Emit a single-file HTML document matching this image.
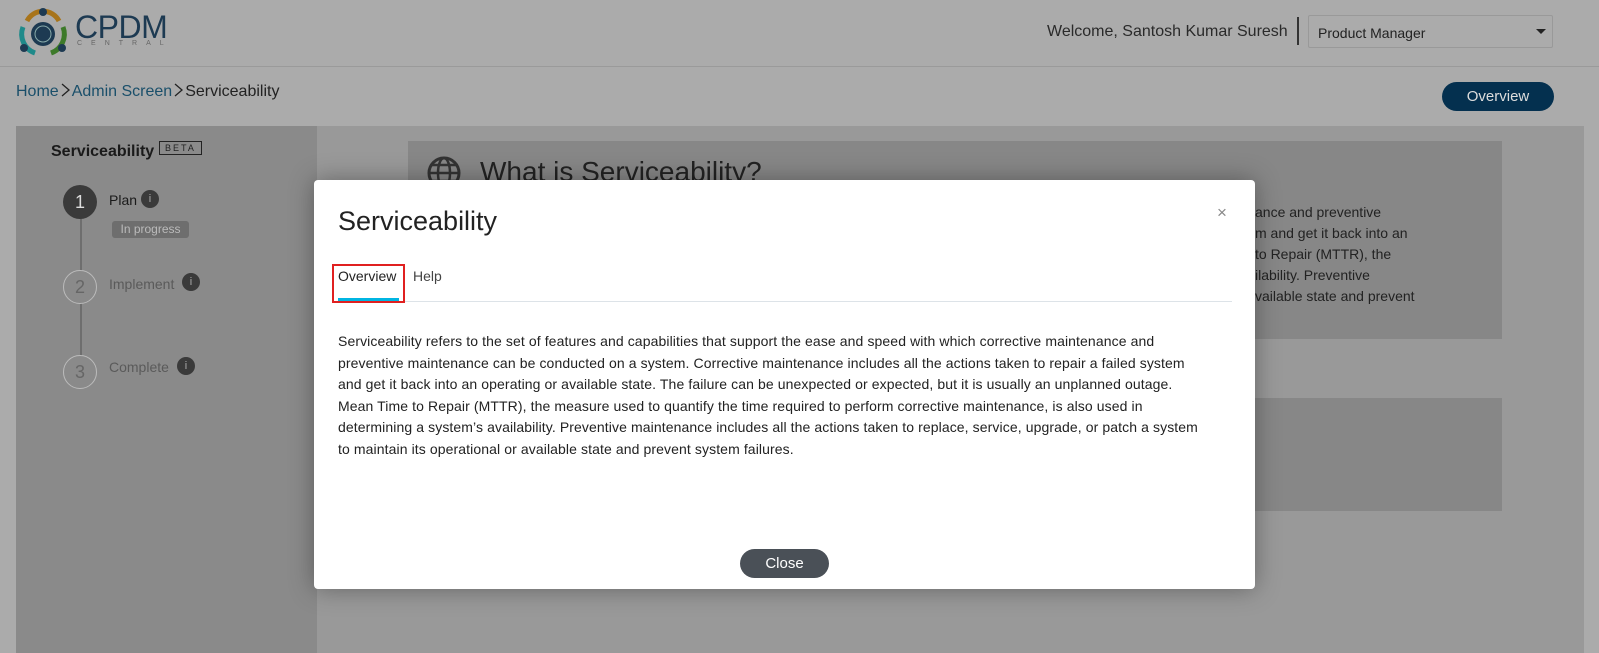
<!DOCTYPE html>
<html><head><meta charset="utf-8"><style>
*{margin:0;padding:0;box-sizing:border-box}
body{width:1599px;height:653px;overflow:hidden;background:#ababab;font-family:"Liberation Sans",Arial,sans-serif;position:relative;color:#222}
.a{position:absolute}
.ch{display:inline-block;width:9px;height:14px;vertical-align:-1px;margin:0 2px}
</style></head><body>
<!-- header -->
<div class="a" style="left:0;top:66px;width:1599px;height:1px;background:#9a9a9a"></div>
<svg class="a" style="left:17px;top:5px" width="52" height="54" viewBox="0 0 52 54">
<path d="M10 16 A18 18 0 0 1 42 16" stroke="#a8741a" stroke-width="5" fill="none"/>
<path d="M6 22 A20 20 0 0 0 18 48" stroke="#1f8a8a" stroke-width="5" fill="none"/>
<path d="M46 22 A20 20 0 0 1 34 48" stroke="#3d7a2a" stroke-width="5" fill="none"/>
<circle cx="26" cy="29" r="12" fill="#1d3a52"/>
<circle cx="26" cy="29" r="8" fill="none" stroke="#8aa" stroke-width="1"/>
<circle cx="26" cy="7" r="4" fill="#1d3a52"/><circle cx="7" cy="43" r="4" fill="#1d3a52"/><circle cx="45" cy="43" r="4" fill="#1d3a52"/>
</svg>
<div class="a" style="left:75px;top:9px;font-size:32px;color:#1d3a52;letter-spacing:-0.5px">CPDM</div>
<div class="a" style="left:77px;top:40px;font-size:7px;color:#666;letter-spacing:9px">CENTRAL</div>
<div class="a" style="left:1047px;top:23px;font-size:16px;color:#2a2a2a">Welcome, Santosh Kumar Suresh</div>
<div class="a" style="left:1297px;top:17px;width:2px;height:28px;background:#333"></div>
<div class="a" style="left:1308px;top:15px;width:245px;height:33px;border:1px solid #999;border-radius:2px;font-size:14px;color:#222;padding:9px 0 0 9px">Product Manager</div>
<div class="a" style="left:1536px;top:29px;border-left:5px solid transparent;border-right:5px solid transparent;border-top:5px solid #222"></div>
<div class="a" style="left:16px;top:83px;font-size:16px;color:#1a4f6a;white-space:nowrap">Home<svg class="ch" viewBox="0 0 9 14"><path d="M1 1 L8 7 L1 13" stroke="#222" stroke-width="1.3" fill="none"/></svg>Admin Screen<svg class="ch" viewBox="0 0 9 14"><path d="M1 1 L8 7 L1 13" stroke="#222" stroke-width="1.3" fill="none"/></svg><span style="color:#222">Serviceability</span></div>
<div class="a" style="left:1442px;top:82px;width:112px;height:29px;border-radius:15px;background:#04304f;color:#ddd;font-size:15px;text-align:center;line-height:29px">Overview</div>
<!-- main -->
<div class="a" style="left:16px;top:126px;width:1568px;height:527px;background:#999"></div>
<div class="a" style="left:16px;top:126px;width:301px;height:527px;background:#8a8a8a"></div>
<div class="a" style="left:408px;top:141px;width:1094px;height:198px;background:#878787"></div>
<div class="a" style="left:408px;top:398px;width:1094px;height:113px;background:#878787"></div>
<div class="a" style="left:480px;top:156px;font-size:28px;color:#222;font-weight:300">What is Serviceability?</div>
<svg class="a" style="left:427px;top:156px" width="34" height="34" viewBox="0 0 34 34"><circle cx="17" cy="17" r="15" stroke="#333" stroke-width="3" fill="none"/><ellipse cx="17" cy="17" rx="6" ry="15" stroke="#333" stroke-width="2.5" fill="none"/><path d="M2 17H32M5 9H29M5 25H29" stroke="#333" stroke-width="2.5"/></svg>
<div class="a" style="left:1255px;top:202px;font-size:14px;line-height:21px;color:#222">ance and preventive<br>m and get it back into an<br>to Repair (MTTR), the<br>ilability. Preventive<br>vailable state and prevent</div>
<!-- left panel -->
<div class="a" style="left:51px;top:143px;font-size:16px;font-weight:bold;color:#1a1a1a">Serviceability</div>
<div class="a" style="left:159px;top:141px;border:1px solid #222;font-size:9px;letter-spacing:2px;padding:1px 5px;color:#222">BETA</div>
<div class="a" style="left:80px;top:215px;width:2px;height:155px;background:#6e6e6e"></div>
<div class="a" style="left:63px;top:185px;width:34px;height:34px;border-radius:50%;background:#3a3a3a;color:#ddd;font-size:18px;text-align:center;line-height:34px">1</div>
<div class="a" style="left:63px;top:270px;width:34px;height:34px;border-radius:50%;background:#8a8a8a;border:1px solid #bbb;color:#666;font-size:18px;text-align:center;line-height:32px">2</div>
<div class="a" style="left:63px;top:355px;width:34px;height:34px;border-radius:50%;background:#8a8a8a;border:1px solid #bbb;color:#666;font-size:18px;text-align:center;line-height:32px">3</div>
<div class="a" style="left:109px;top:192px;font-size:14px;color:#1a1a1a">Plan</div>
<div class="a" style="left:141px;top:190px;width:18px;height:18px;border-radius:50%;background:#3a3a3a;color:#aaa;font-size:11px;text-align:center;line-height:18px">i</div>
<div class="a" style="left:112px;top:221px;width:77px;height:17px;border-radius:3px;background:#6e6e6e;color:#bbb;font-size:12px;text-align:center;line-height:17px">In progress</div>
<div class="a" style="left:109px;top:276px;font-size:14px;color:#5a5a5a">Implement</div>
<div class="a" style="left:182px;top:273px;width:18px;height:18px;border-radius:50%;background:#3a3a3a;color:#aaa;font-size:11px;text-align:center;line-height:18px">i</div>
<div class="a" style="left:109px;top:359px;font-size:14px;color:#5a5a5a">Complete</div>
<div class="a" style="left:177px;top:357px;width:18px;height:18px;border-radius:50%;background:#3a3a3a;color:#aaa;font-size:11px;text-align:center;line-height:18px">i</div>
<!-- modal -->
<div class="a" style="left:314px;top:180px;width:941px;height:409px;background:#fff;border-radius:4px;box-shadow:0 0 25px rgba(0,0,0,.35)"></div>
<div class="a" style="left:338px;top:206px;font-size:27px;color:#222">Serviceability</div>
<div class="a" style="left:1217px;top:203px;font-size:17px;color:#888">×</div>
<div class="a" style="left:338px;top:268px;font-size:14px;color:#222">Overview</div>
<div class="a" style="left:413px;top:268px;font-size:14px;color:#444">Help</div>
<div class="a" style="left:338px;top:301px;width:894px;height:1px;background:#dde3e8"></div>
<div class="a" style="left:338px;top:298px;width:61px;height:3px;background:#00b5e2"></div>
<div class="a" style="left:332px;top:264px;width:73px;height:39px;border:2px solid #e02020"></div>
<div class="a" style="left:338px;top:331px;font-size:14px;line-height:21.5px;color:#222;white-space:nowrap;letter-spacing:0.1px">Serviceability refers to the set of features and capabilities that support the ease and speed with which corrective maintenance and<br>preventive maintenance can be conducted on a system. Corrective maintenance includes all the actions taken to repair a failed system<br>and get it back into an operating or available state. The failure can be unexpected or expected, but it is usually an unplanned outage.<br>Mean Time to Repair (MTTR), the measure used to quantify the time required to perform corrective maintenance, is also used in<br>determining a system’s availability. Preventive maintenance includes all the actions taken to replace, service, upgrade, or patch a system<br>to maintain its operational or available state and prevent system failures.</div>
<div class="a" style="left:740px;top:549px;width:89px;height:29px;border-radius:15px;background:#4a5057;color:#fff;font-size:15px;text-align:center;line-height:29px">Close</div>
</body></html>
